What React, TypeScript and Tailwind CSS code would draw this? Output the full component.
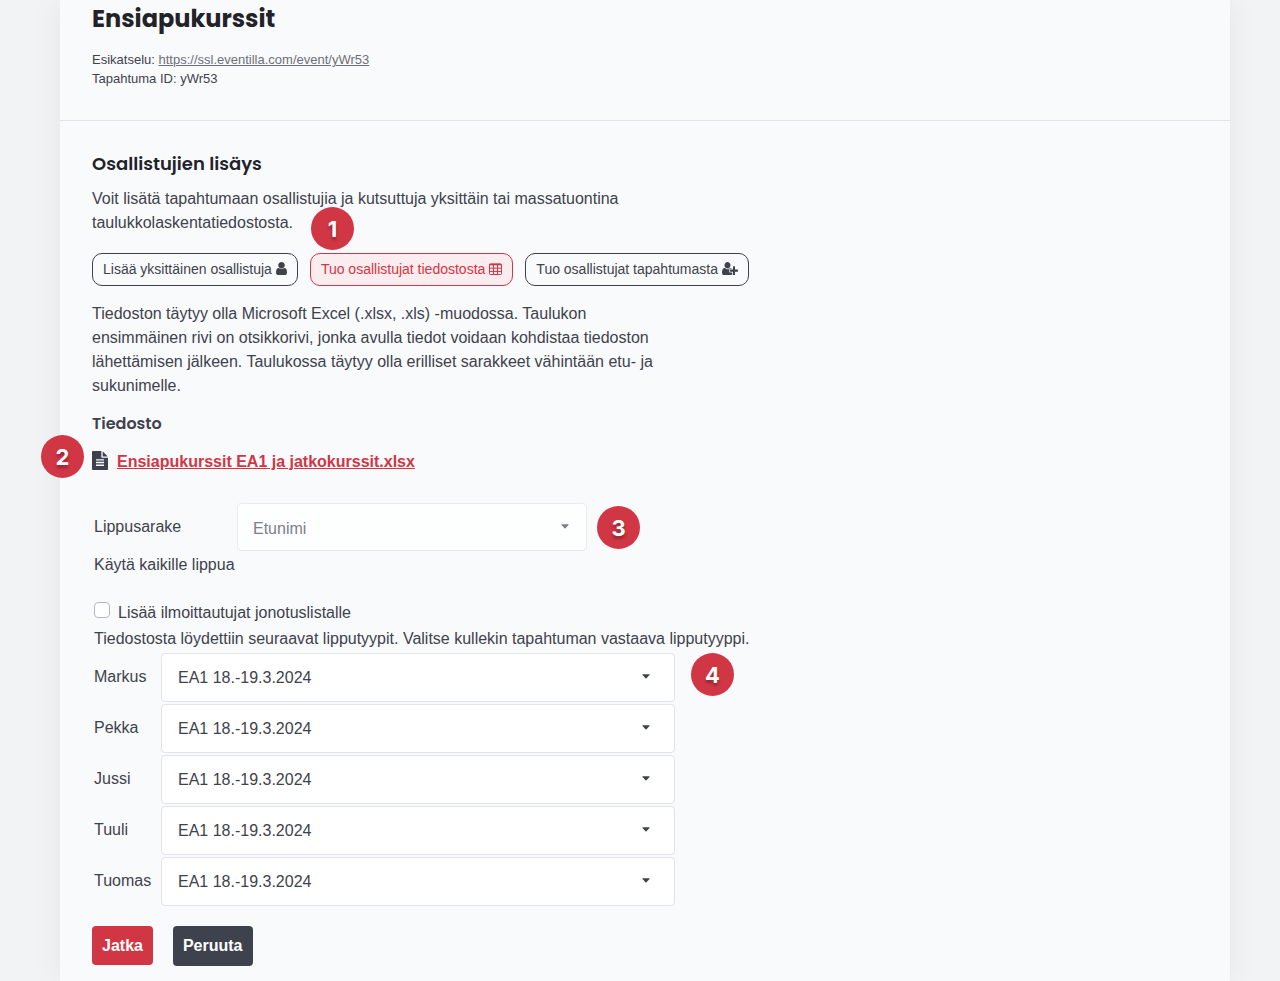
import { useState } from "react";
import type { ReactNode } from "react";

interface IconProps {
  path: string;
  viewBox: string;
  className: string;
}

interface TicketType {
  id: string;
  label: string;
}

const ticketTypes: TicketType[] = [
  { id: "markus", label: "Markus" },
  { id: "pekka", label: "Pekka" },
  { id: "jussi", label: "Jussi" },
  { id: "tuuli", label: "Tuuli" },
  { id: "tuomas", label: "Tuomas" },
];

const userPath =
  "M1280 1399q0 109-62.5 187t-150.5 78h-854q-88 0-150.5-78t-62.5-187q0-85 8.5-160.5t31.5-152 58.5-131 94-89 134.5-34.5q131 128 313 128t313-128q76 0 134.5 34.5t94 89 58.5 131 31.5 152 8.5 160.5zm-256-887q0 159-112.5 271.5t-271.5 112.5-271.5-112.5-112.5-271.5 112.5-271.5 271.5-112.5 271.5 112.5 112.5 271.5z";

const userPlusPath =
  "M704 896q-159 0-271.5-112.5t-112.5-271.5 112.5-271.5 271.5-112.5 271.5 112.5 112.5 271.5-112.5 271.5-271.5 112.5zm960 128h352q13 0 22.5 9.5t9.5 22.5v192q0 13-9.5 22.5t-22.5 9.5h-352v352q0 13-9.5 22.5t-22.5 9.5h-192q-13 0-22.5-9.5t-9.5-22.5v-352h-352q-13 0-22.5-9.5t-9.5-22.5v-192q0-13 9.5-22.5t22.5-9.5h352v-352q0-13 9.5-22.5t22.5-9.5h192q13 0 22.5 9.5t9.5 22.5v352zm-736 224q0 52 38 90t90 38h256v238q-68 50-171 50h-874q-121 0-194-69t-73-190q0-53 3.5-103.5t14-109 26.5-108.5 43-97.5 62-81 85.5-53.5 111.5-20q19 0 39 17 79 61 154.5 91.5t164.5 30.5 164.5-30.5 154.5-91.5q20-17 39-17 132 0 217 96h-223q-52 0-90 38t-38 90v192z";

const filePath =
  "M1596 476q14 14 28 36h-472v-472q22 14 36 28zm-476 164h544v1056q0 40-28 68t-68 28h-1344q-40 0-68-28t-28-68v-1600q0-40 28-68t68-28h800v544q0 40 28 68t68 28zM1280 1408v-128h-768v128zM1280 1152v-128h-768v128zM1280 896v-128h-768v128z";

function Icon({ path, viewBox, className }: IconProps) {
  return (
    <svg
      viewBox={viewBox}
      className={className}
      fill="currentColor"
      fillRule="evenodd"
      preserveAspectRatio="none"
      aria-hidden="true"
    >
      <path d={path} />
    </svg>
  );
}

function TableIcon() {
  return (
    <svg
      viewBox="0 0 13 12"
      className="h-3 w-[13px]"
      fill="none"
      stroke="currentColor"
      aria-hidden="true"
    >
      <rect x="0.5" y="0.9" width="12" height="10.6" rx="1" />
      <path d="M0.5 1.6h12" strokeWidth="1.4" />
      <path d="M0.5 5.2h12M0.5 8.4h12M4.5 2v9.5M8.5 2v9.5" />
    </svg>
  );
}

function StepBadge({ step, className }: { step: number; className: string }) {
  return (
    <span
      className={`absolute flex h-[43px] w-[43px] items-center justify-center rounded-full bg-[#d13644] pt-px font-['Inter',sans-serif] text-[22px] font-bold text-white [text-shadow:0_3px_3px_rgba(0,0,0,0.3)] ${className}`}
    >
      {step}
    </span>
  );
}

function Caret({ className }: { className: string }) {
  return (
    <svg
      viewBox="0 0 8 5"
      className={`pointer-events-none absolute h-[5px] w-2 ${className}`}
      fill="currentColor"
      aria-hidden="true"
    >
      <path d="M0.8 0.3h6.4q0.7 0 0.3 0.7L4.5 4.2q-0.5 0.5-1 0L0.5 1q-0.4-0.7 0.3-0.7z" />
    </svg>
  );
}

function ModeButton({
  active,
  onClick,
  children,
}: {
  active: boolean;
  onClick: () => void;
  children: ReactNode;
}) {
  return (
    <button
      type="button"
      onClick={onClick}
      className={`flex h-[33px] cursor-pointer items-center gap-1 rounded-[10px] border px-2.5 pb-0.5 text-sm ${
        active
          ? "border-[#d13644] bg-[#fbecef] text-[#d13644]"
          : "border-[#3e424c] text-[#3e424c]"
      }`}
    >
      {children}
    </button>
  );
}

function App() {
  const [mode, setMode] = useState("file");
  const [waitingList, setWaitingList] = useState(false);

  return (
    <div className="min-h-screen overflow-hidden bg-[#f2f3f5] pr-[50px] pl-[60px] font-['Liberation_Sans',Arial,sans-serif] text-[#3e424c]">
      <main className="min-h-screen bg-[#f9fafc] shadow-[0_0_30px_rgba(0,0,0,0.06)]">
        <header className="border-b border-[#e1e3e7] px-8 pt-[3px] pb-8">
          <h1 className="font-['Poppins','Inter',sans-serif] text-2xl leading-8 font-bold text-[#212329]">
            Ensiapukurssit
          </h1>
          <div className="mt-[15px] text-[13px] leading-[19px]">
            <p>
              Esikatselu:{" "}
              <a
                href="https://ssl.eventilla.com/event/yWr53"
                className="text-[#6d7079] underline"
              >
                https://ssl.eventilla.com/event/yWr53
              </a>
            </p>
            <p>Tapahtuma ID: yWr53</p>
          </div>
        </header>

        <section className="px-8 pt-[29px] pb-4">
          <h2 className="font-['Poppins','Inter',sans-serif] text-lg leading-7 font-semibold text-[#212329]">
            Osallistujien lisäys
          </h2>
          <p className="mt-[9px] max-w-[570px]">
            Voit lisätä tapahtumaan osallistujia ja kutsuttuja yksittäin tai
            massatuontina taulukkolaskentatiedostosta.
          </p>

          <div className="mt-[18px] flex flex-wrap gap-3">
            <ModeButton
              active={mode === "single"}
              onClick={() => setMode("single")}
            >
              Lisää yksittäinen osallistuja
              <Icon
                path={userPath}
                viewBox="0 128 1280 1536"
                className="h-[13px] w-[11px]"
              />
            </ModeButton>
            <div className="relative">
              <ModeButton
                active={mode === "file"}
                onClick={() => setMode("file")}
              >
                Tuo osallistujat tiedostosta
                <TableIcon />
              </ModeButton>
              <StepBadge step={1} className="-top-[46px] left-px" />
            </div>
            <ModeButton
              active={mode === "event"}
              onClick={() => setMode("event")}
            >
              Tuo osallistujat tapahtumasta
              <Icon
                path={userPlusPath}
                viewBox="0 128 2048 1536"
                className="h-[13px] w-4"
              />
            </ModeButton>
          </div>

          <p className="mt-4 max-w-[570px]">
            Tiedoston täytyy olla Microsoft Excel (.xlsx, .xls) -muodossa.
            Taulukon ensimmäinen rivi on otsikkorivi, jonka avulla tiedot
            voidaan kohdistaa tiedoston lähettämisen jälkeen. Taulukossa täytyy
            olla erilliset sarakkeet vähintään etu- ja sukunimelle.
          </p>

          <h3 className="mt-[14px] font-['Poppins','Inter',sans-serif] font-semibold">
            Tiedosto
          </h3>
          <div className="relative mt-[13px] flex items-start">
            <StepBadge step={2} className="-top-[14px] -left-[51px]" />
            <Icon
              path={filePath}
              viewBox="128 0 1536 1792"
              className="mt-0.5 mr-[9px] h-[19px] w-4"
            />
            <a
              href="#tiedosto"
              className="pt-px font-bold text-[#d13644] underline"
            >
              Ensiapukurssit EA1 ja jatkokurssit.xlsx
            </a>
          </div>

          <form className="mt-[29px]" onSubmit={(e) => e.preventDefault()}>
            <div className="pl-0.5">
              <div className="flex items-center">
                <label htmlFor="ticket-column" className="w-[143px]">
                  Lippusarake
                </label>
                <div className="relative w-[350px]">
                  <select
                    id="ticket-column"
                    disabled
                    className="h-12 w-full appearance-none rounded border border-[#e9ebee] bg-[#fdfefe] px-[15px] pt-1 text-[#7c7f87] opacity-100"
                  >
                    <option>Etunimi</option>
                  </select>
                  <Caret className="top-[21px] right-[18px] text-[#7c7f87]" />
                  <StepBadge step={3} className="top-[3px] -right-[53px]" />
                </div>
              </div>
              <p className="mt-0.5">Käytä kaikille lippua</p>

              <div className="mt-6 flex gap-2">
                <input
                  id="waiting-list"
                  type="checkbox"
                  checked={waitingList}
                  onChange={(e) => setWaitingList(e.target.checked)}
                  className="mt-px h-4 w-4 appearance-none rounded border border-[#b5b7be] bg-white checked:bg-[#d13644]"
                />
                <label htmlFor="waiting-list">
                  Lisää ilmoittautujat jonotuslistalle
                </label>
              </div>
              <p className="mt-0.5">
                Tiedostosta löydettiin seuraavat lipputyypit. Valitse kullekin
                tapahtuman vastaava lipputyyppi.
              </p>

              <div className="mt-0.5 flex flex-col gap-0.5">
                {ticketTypes.map((ticket, index) => (
                  <div key={ticket.id} className="flex items-center">
                    <label htmlFor={ticket.id} className="w-[67px] pb-0.5">
                      {ticket.label}
                    </label>
                    <div className="relative w-[514px]">
                      <select
                        id={ticket.id}
                        className="h-[49px] w-full appearance-none rounded border border-[#e1e3e7] bg-white px-4"
                      >
                        <option>EA1 18.-19.3.2024</option>
                      </select>
                      <Caret className="top-[21px] right-[25px]" />
                      {index === 0 && (
                        <StepBadge step={4} className="top-0 -right-[59px]" />
                      )}
                    </div>
                  </div>
                ))}
              </div>
            </div>

            <div className="mt-5 flex items-start gap-5 font-bold text-white">
              <button
                type="submit"
                className="h-[39px] cursor-pointer rounded bg-[#d13644] px-2.5"
              >
                Jatka
              </button>
              <button
                type="button"
                className="h-10 cursor-pointer rounded bg-[#3e424c] px-2.5"
              >
                Peruuta
              </button>
            </div>
          </form>
        </section>
      </main>
    </div>
  );
}

export default App;
